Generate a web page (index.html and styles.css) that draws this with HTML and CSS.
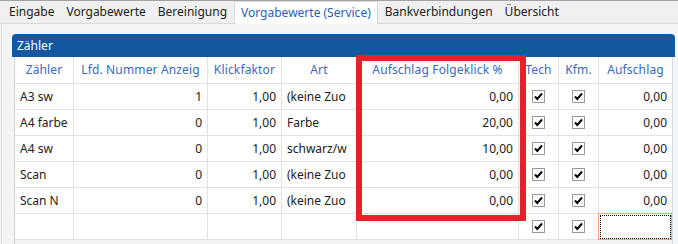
FILE: index.html
```html
<!DOCTYPE html>
<html lang="de">
<head>
  <meta charset="UTF-8">
  <title>Vorgabewerte (Service)</title>
  <link rel="stylesheet" href="styles.css">
</head>
<body>
  <nav class="tabs">
    <span class="tab">Eingabe</span>
    <span class="tab">Vorgabewerte</span>
    <span class="tab">Bereinigung</span>
    <span class="tab active">Vorgabewerte (Service)</span>
    <span class="tab">Bankverbindungen</span>
    <span class="tab">Übersicht</span>
  </nav>

  <main class="content">
    <section class="panel">
      <div class="panel-head">Zähler</div>
      <div class="grid">
        <div class="row head">
          <div class="c">Zähler</div>
          <div class="c">Lfd. Nummer Anzeig</div>
          <div class="c">Klickfaktor</div>
          <div class="c">Art</div>
          <div class="c">Aufschlag Folgeklick %</div>
          <div class="c">Tech</div>
          <div class="c">Kfm.</div>
          <div class="c">Aufschlag</div>
        </div>
        <div class="row">
          <div class="c">A3 sw</div>
          <div class="c num">1</div>
          <div class="c num">1,00</div>
          <div class="c">(keine Zuo</div>
          <div class="c num">0,00</div>
          <div class="c chk"><svg viewBox="0 0 13 13"><rect x="0.5" y="0.5" width="12" height="12"/><path d="M3 6.5l2.3 2.5 4.7-5.5"/></svg></div>
          <div class="c chk"><svg viewBox="0 0 13 13"><rect x="0.5" y="0.5" width="12" height="12"/><path d="M3 6.5l2.3 2.5 4.7-5.5"/></svg></div>
          <div class="c num">0,00</div>
        </div>
        <div class="row">
          <div class="c">A4 farbe</div>
          <div class="c num">0</div>
          <div class="c num">1,00</div>
          <div class="c">Farbe</div>
          <div class="c num">20,00</div>
          <div class="c chk"><svg viewBox="0 0 13 13"><rect x="0.5" y="0.5" width="12" height="12"/><path d="M3 6.5l2.3 2.5 4.7-5.5"/></svg></div>
          <div class="c chk"><svg viewBox="0 0 13 13"><rect x="0.5" y="0.5" width="12" height="12"/><path d="M3 6.5l2.3 2.5 4.7-5.5"/></svg></div>
          <div class="c num">0,00</div>
        </div>
        <div class="row">
          <div class="c">A4 sw</div>
          <div class="c num">0</div>
          <div class="c num">1,00</div>
          <div class="c">schwarz/w</div>
          <div class="c num">10,00</div>
          <div class="c chk"><svg viewBox="0 0 13 13"><rect x="0.5" y="0.5" width="12" height="12"/><path d="M3 6.5l2.3 2.5 4.7-5.5"/></svg></div>
          <div class="c chk"><svg viewBox="0 0 13 13"><rect x="0.5" y="0.5" width="12" height="12"/><path d="M3 6.5l2.3 2.5 4.7-5.5"/></svg></div>
          <div class="c num">0,00</div>
        </div>
        <div class="row">
          <div class="c">Scan</div>
          <div class="c num">0</div>
          <div class="c num">1,00</div>
          <div class="c">(keine Zuo</div>
          <div class="c num">0,00</div>
          <div class="c chk"><svg viewBox="0 0 13 13"><rect x="0.5" y="0.5" width="12" height="12"/><path d="M3 6.5l2.3 2.5 4.7-5.5"/></svg></div>
          <div class="c chk"><svg viewBox="0 0 13 13"><rect x="0.5" y="0.5" width="12" height="12"/><path d="M3 6.5l2.3 2.5 4.7-5.5"/></svg></div>
          <div class="c num">0,00</div>
        </div>
        <div class="row">
          <div class="c">Scan N</div>
          <div class="c num">0</div>
          <div class="c num">1,00</div>
          <div class="c">(keine Zuo</div>
          <div class="c num">0,00</div>
          <div class="c chk"><svg viewBox="0 0 13 13"><rect x="0.5" y="0.5" width="12" height="12"/><path d="M3 6.5l2.3 2.5 4.7-5.5"/></svg></div>
          <div class="c chk"><svg viewBox="0 0 13 13"><rect x="0.5" y="0.5" width="12" height="12"/><path d="M3 6.5l2.3 2.5 4.7-5.5"/></svg></div>
          <div class="c num">0,00</div>
        </div>
        <div class="row">
          <div class="c"></div>
          <div class="c"></div>
          <div class="c"></div>
          <div class="c"></div>
          <div class="c"></div>
          <div class="c chk"><svg viewBox="0 0 13 13"><rect x="0.5" y="0.5" width="12" height="12"/><path d="M3 6.5l2.3 2.5 4.7-5.5"/></svg></div>
          <div class="c chk"><svg viewBox="0 0 13 13"><rect x="0.5" y="0.5" width="12" height="12"/><path d="M3 6.5l2.3 2.5 4.7-5.5"/></svg></div>
          <div class="c focus"></div>
        </div>
      </div>
    </section>
  </main>

  <div class="marker"></div>
</body>
</html>
```

FILE: styles.css
```css
body { margin: 0; width: 678px; height: 244px; overflow: hidden; background: #f4f4f4; font-family: "Noto Sans", "Open Sans", sans-serif; font-size: 12px; color: #222; position: relative; }

.tabs { display: flex; height: 22px; padding-left: 3px; background: #f0f0f0; border-top: 1px solid #a3a3a3; border-bottom: 1px solid #d9d9d9; }
.tab { padding: 0 6px; line-height: 22px; white-space: nowrap; }
.tab.active { background: #fff; color: #2b60b6; border: 1px solid #d9d9d9; border-bottom: none; margin: 0 1px -1px 1px; padding: 0 6px; line-height: 22px; }

.content { margin-left: 1px; border-left: 1px solid #dadada; padding: 10px 3px 0 10px; height: 210px; }

.panel-head { height: 23px; line-height: 23px; padding-left: 5px; background: #1357a1; color: #fff; border-radius: 4px 4px 0 0; }

.grid { margin: 0 2px; height: 187px; background: #f2f2f2; border-left: 1px solid #c6d5e8; border-right: 1px solid #d3dbe6; }
.row { display: grid; grid-template-columns: 59px 134px 74px 75px 162px 40px 40px 73px; height: 26px; background: #fff; }
.row.head { height: 27px; }
.c { border-right: 1px solid #e2e2e2; border-bottom: 1px solid #e2e2e2; padding: 0 5px; line-height: 25px; white-space: nowrap; position: relative; }
.c:last-child { border-right: none; }
.head .c { line-height: 26px; text-align: center; color: #3a6abd; padding: 0 2px; letter-spacing: 0.15px; }
.num { text-align: right; }
.chk { display: flex; align-items: center; justify-content: center; padding: 0; }
.chk svg { width: 13px; height: 13px; }
.chk rect { fill: #fff; stroke: #9a9a9a; }
.chk path { fill: none; stroke: #000; stroke-width: 2; }

.focus::before { content: ""; position: absolute; top: -1px; left: -1px; right: 0; bottom: -1px; border: 1px solid #f0a27c; }
.focus::after { content: ""; position: absolute; top: 1px; left: 1px; right: 1px; bottom: 0; border: 1px dotted #000; }

.marker { position: absolute; left: 356px; top: 55px; width: 158px; height: 154px; border: 6px solid #e8202a; }
```
